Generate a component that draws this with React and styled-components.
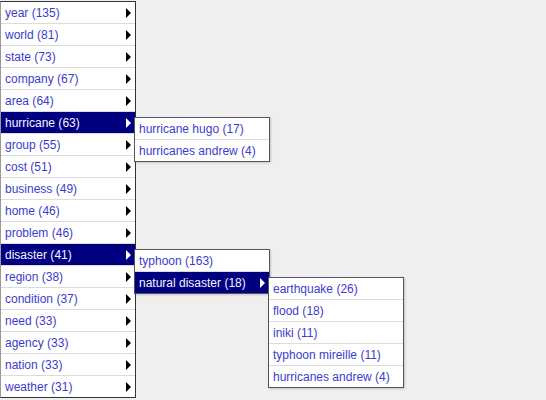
import React from 'react';
import styled, { createGlobalStyle } from 'styled-components';

const GlobalStyle = createGlobalStyle`
    html, body {
        margin: 0;
        padding: 0;
        background: #efefef;
        font-family: "Liberation Sans", Arial, sans-serif;
    }
`;

const tree = [
    { label: 'year', count: 135 },
    { label: 'world', count: 81 },
    { label: 'state', count: 73 },
    { label: 'company', count: 67 },
    { label: 'area', count: 64 },
    {
        label: 'hurricane', count: 63, open: true,
        items: [
            { label: 'hurricane hugo', count: 17 },
            { label: 'hurricanes andrew', count: 4 },
        ],
    },
    { label: 'group', count: 55 },
    { label: 'cost', count: 51 },
    { label: 'business', count: 49 },
    { label: 'home', count: 46 },
    { label: 'problem', count: 46 },
    {
        label: 'disaster', count: 41, open: true,
        items: [
            { label: 'typhoon', count: 163 },
            {
                label: 'natural disaster', count: 18, open: true,
                items: [
                    { label: 'earthquake', count: 26 },
                    { label: 'flood', count: 18 },
                    { label: 'iniki', count: 11 },
                    { label: 'typhoon mireille', count: 11 },
                    { label: 'hurricanes andrew', count: 4 },
                ],
            },
        ],
    },
    { label: 'region', count: 38 },
    { label: 'condition', count: 37 },
    { label: 'need', count: 33 },
    { label: 'agency', count: 33 },
    { label: 'nation', count: 33 },
    { label: 'weather', count: 31 },
];

const Menu = styled.ul`
    list-style: none;
    margin: 0;
    padding: 0;
    width: 134px;
    background: #fff;
    border: 1px solid #555;
`;

const RootMenu = styled(Menu)`
    margin-top: 1px;
    border-color: #333;
    border-left-color: #999;
`;

const SubMenu = styled(Menu)`
    position: absolute;
    left: calc(100% - 1px);
    top: 5px;
    z-index: 2;
    box-shadow: 1px 1px 2px rgba(0, 0, 0, 0.18);
`;

const Row = styled.li`
    position: relative;
    height: 21px;
    border-bottom: 1px solid #dcdcdc;
    background: ${props => (props.$active ? '#000080' : '#fff')};
    &:last-child {
        border-bottom: none;
    }
`;

const Label = styled.div`
    display: flex;
    align-items: center;
    height: 100%;
    padding-left: 4px;
    font-size: 12px;
    color: ${props => (props.$active ? '#f4f4ff' : '#3c3ccc')};
    white-space: nowrap;
`;

const Arrow = styled.span`
    position: absolute;
    right: 4px;
    top: 6px;
    width: 0;
    height: 0;
    border-top: 5px solid transparent;
    border-bottom: 5px solid transparent;
    border-left: 5px solid ${props => (props.$active ? '#fff' : '#000')};
`;

function Items({ items, root }) {
    return items.map(item => (
        <Row key={item.label} $active={item.open}>
            <Label $active={item.open}>{item.label} ({item.count})</Label>
            {/* top level entries always show an arrow, deeper ones only when they have children */}
            {(root || item.items) && <Arrow $active={item.open} />}
            {item.items && (
                <SubMenu>
                    <Items items={item.items} />
                </SubMenu>
            )}
        </Row>
    ));
}

export default function App() {
    return (
        <>
            <GlobalStyle />
            <RootMenu>
                <Items items={tree} root />
            </RootMenu>
        </>
    );
}
